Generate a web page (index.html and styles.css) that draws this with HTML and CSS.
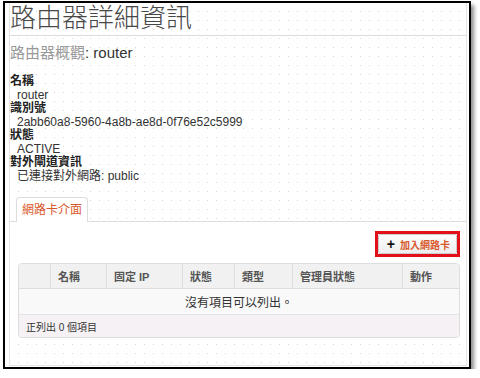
FILE: index.html
```html
<!DOCTYPE html>
<html>

<head>
  <meta charset="UTF-8">
  <meta name="viewport" content="width=device-width, initial-scale=1.0">
  <title>路由器詳細資訊</title>
  <link rel="stylesheet" href="styles.css">
</head>

<body>
  <div class="frame">
    <div class="page">
      <div class="page-header">
        <h1>路由器詳細資訊</h1>
      </div>

      <h2 class="overview"><span class="muted">路由器概觀</span>: router</h2>

      <dl class="info">
        <dt>名稱</dt>
        <dd>router</dd>
        <dt>識別號</dt>
        <dd>2abb60a8-5960-4a8b-ae8d-0f76e52c5999</dd>
        <dt>狀態</dt>
        <dd>ACTIVE</dd>
        <dt>對外閘道資訊</dt>
        <dd>已連接對外網路: public</dd>
      </dl>

      <ul class="tabs">
        <li class="active">網路卡介面</li>
      </ul>

      <div class="tab-pane">
        <div class="actions">
          <span class="highlight">
            <button class="btn"><span class="plus">+</span>加入網路卡</button>
          </span>
        </div>

        <table class="table">
          <thead>
            <tr>
              <th class="col-check"></th>
              <th class="col-name">名稱</th>
              <th class="col-ip">固定 IP</th>
              <th class="col-status">狀態</th>
              <th class="col-type">類型</th>
              <th class="col-admin">管理員狀態</th>
              <th class="col-actions">動作</th>
            </tr>
          </thead>
          <tbody>
            <tr class="empty">
              <td colspan="7">沒有項目可以列出。</td>
            </tr>
          </tbody>
          <tfoot>
            <tr>
              <td colspan="7">正列出 0 個項目</td>
            </tr>
          </tfoot>
        </table>
      </div>
    </div>
  </div>
</body>

</html>
```

FILE: styles.css
```css
body {
  background: #fff;
  color: #333;
  font-family: "Liberation Sans", "Noto Sans CJK TC", sans-serif;
  margin: 0;
  padding: 0;
}

.frame,
.page {
  background-color: #fff;
  background-image:
    linear-gradient(to right, #fff 8px, transparent 8px),
    linear-gradient(to bottom, #fff 8px, #d6d6d6 8px);
  background-size: 9px 9px;
}

.frame {
  border: 2px solid #000;
  box-shadow: 3px 4px 4px rgba(0, 0, 0, 0.45);
  box-sizing: border-box;
  height: 368px;
  margin: 1px 0 0 3px;
  width: 468px;
}

.page {
  border: 1px solid #e4e4e4;
  border-top: 0;
  box-sizing: border-box;
  height: 363px;
  margin: 0 2px 0 4px;
  padding-top: 1px;
}

.page-header {
  border-bottom: 1px solid #dcdcdc;
  padding-bottom: 3px;
}

h1 {
  color: #484848;
  font-size: 26px;
  font-weight: 300;
  line-height: 28px;
  margin: 0;
}

.overview {
  color: #333;
  font-size: 15px;
  font-weight: normal;
  line-height: 18px;
  margin: 8px 0 0;
}

.muted {
  color: #999;
}

.info {
  font-size: 12px;
  line-height: 13.5px;
  margin: 13px 0 0;
}

.info dt {
  color: #222;
  font-weight: bold;
}

.info dd {
  margin: 0 0 0 7px;
}

.tabs {
  border-bottom: 1px solid #ddd;
  display: flex;
  list-style: none;
  margin: 14px 0 0;
  padding: 0 0 0 6px;
}

.tabs li {
  background: #fff;
  border: 1px solid #ddd;
  border-bottom: 0;
  border-radius: 4px 4px 0 0;
  color: #d9582b;
  font-size: 12px;
  line-height: 24px;
  margin-bottom: -1px;
  padding: 0 5px;
}

.tab-pane {
  background: #fff;
  padding: 9px 6px 2px 8px;
}

.actions {
  display: flex;
  justify-content: flex-end;
}

.highlight {
  border: 3px solid #e3101a;
  display: flex;
}

.btn {
  align-items: center;
  background: linear-gradient(#fdfdfd, #eee);
  border: 1px solid #ccc;
  border-radius: 2px;
  color: #d9582b;
  display: flex;
  font-family: inherit;
  font-size: 10px;
  font-weight: bold;
  gap: 5px;
  height: 20px;
  padding: 0 6px 0 8px;
}

.plus {
  color: #111;
  font-size: 14px;
  font-weight: bold;
  line-height: 1;
}

.table {
  border: 1px solid #ddd;
  border-collapse: separate;
  border-radius: 4px;
  border-spacing: 0;
  margin-top: 6px;
  table-layout: fixed;
  width: 100%;
}

.table th {
  background: #f1f1f1;
  border-bottom: 1px solid #ddd;
  border-left: 1px solid #ddd;
  box-sizing: border-box;
  color: #555;
  font-size: 11px;
  font-weight: bold;
  height: 25px;
  padding: 0 7px;
  text-align: left;
}

.table th:first-child {
  border-left: 0;
  border-top-left-radius: 4px;
}

.table th:last-child {
  border-top-right-radius: 4px;
}

.col-check { width: 31px; }
.col-name { width: 56px; }
.col-ip { width: 76px; }
.col-status { width: 52px; }
.col-type { width: 58px; }
.col-admin { width: 110px; }

.table .empty td {
  background: #f9f9f9;
  border-bottom: 1px solid #e4e4e4;
  font-size: 12px;
  height: 25px;
  padding: 0;
  text-align: center;
}

.table tfoot td {
  background: #f5f1f4;
  border-radius: 0 0 4px 4px;
  font-size: 10px;
  height: 22px;
  padding: 0 7px;
}
```
